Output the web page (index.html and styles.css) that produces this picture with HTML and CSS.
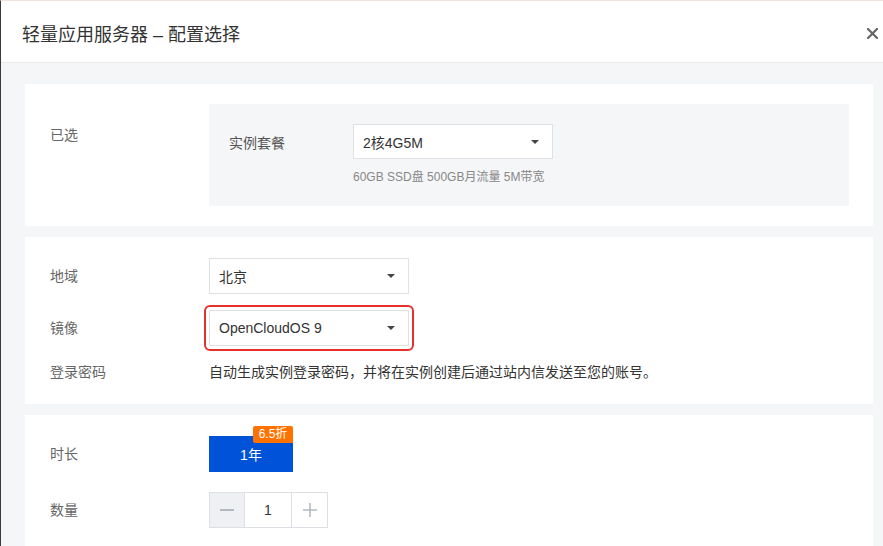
FILE: index.html
```html
<!DOCTYPE html>
<html lang="zh-CN">
<head>
<meta charset="utf-8">
<title>轻量应用服务器 – 配置选择</title>
<link rel="stylesheet" href="styles.css">
</head>
<body>
<div class="modal">
  <header class="modal-header">
    <h1 class="modal-title">轻量应用服务器 – 配置选择</h1>
    <button class="close-btn" aria-label="关闭">
      <svg width="11" height="11" viewBox="0 0 11 11"><path d="M1 1L10 10M10 1L1 10" stroke="#666" stroke-width="2.2" stroke-linecap="square"/></svg>
    </button>
  </header>
  <main class="modal-body">
    <section class="card card-selected">
      <div class="label label-top">已选</div>
      <div class="selected-box">
        <div class="sel-row">
          <span class="sel-label">实例套餐</span>
          <div class="select"><span>2核4G5M</span><i class="caret"></i></div>
        </div>
        <div class="sub-text">60GB SSD盘 500GB月流量 5M带宽</div>
      </div>
    </section>

    <section class="card form-grid">
      <div class="label">地域</div>
      <div class="field"><div class="select"><span>北京</span><i class="caret"></i></div></div>

      <div class="label">镜像</div>
      <div class="field"><div class="select highlighted"><span>OpenCloudOS 9</span><i class="caret"></i></div></div>

      <div class="label">登录密码</div>
      <div class="field field-text">自动生成实例登录密码，并将在实例创建后通过站内信发送至您的账号。</div>
    </section>

    <section class="card form-grid form-grid-wide">
      <div class="label">时长</div>
      <div class="field">
        <button class="period-btn">1年<span class="badge">6.5折</span></button>
      </div>

      <div class="label">数量</div>
      <div class="field">
        <div class="stepper">
          <span class="step step-minus"><i class="minus-line"></i></span>
          <span class="step step-value">1</span>
          <span class="step step-plus">
            <svg width="14" height="14" viewBox="0 0 14 14"><path d="M7 0V14M0 7H14" stroke="#b4b9c2" stroke-width="1.6"/></svg>
          </span>
        </div>
      </div>
    </section>
  </main>
</div>
</body>
</html>
```

FILE: styles.css
```css
* { box-sizing: border-box; }
html, body {
  margin: 0;
  padding: 0;
  height: 100%;
  overflow: hidden;
}
body {
  font-family: "Liberation Sans", "Noto Sans CJK SC", sans-serif;
  color: #333;
  font-size: 14px;
  background: #fff;
}
.modal {
  height: 546px;
  border-top: 1px solid #f1e3d9;
  border-left: 1px solid #3a3a3a;
  display: flex;
  flex-direction: column;
  background: #f5f6f8;
}
.modal-header {
  height: 62px;
  flex: none;
  background: #fff;
  border-bottom: 1px solid #e9eaec;
  display: flex;
  align-items: center;
  justify-content: space-between;
  padding: 0 5px 0 21px;
}
.modal-title {
  margin: 0;
  font-size: 18px;
  font-weight: normal;
  color: #333;
  line-height: 24px;
  padding-top: 6px;
}
.close-btn {
  border: 0;
  background: none;
  padding: 0;
  width: 11px;
  height: 11px;
  display: flex;
  margin-top: 4px;
}
.modal-body {
  flex: 1;
  padding: 21px 10px 0 24px;
  display: flex;
  flex-direction: column;
  gap: 11px;
}
.card {
  background: #fff;
  padding: 20px 24px 20px 25px;
}
.card-selected {
  display: flex;
}
.label {
  width: 159px;
  flex: none;
  color: #666;
  font-size: 14px;
  line-height: 20px;
}
.label-top { padding-top: 21px; }
.selected-box {
  flex: 1;
  background: #f5f6f8;
  padding: 20px;
}
.sel-row {
  display: flex;
  align-items: center;
}
.sel-label {
  width: 124px;
  color: #555;
  font-size: 14px;
}
.select {
  width: 200px;
  height: 35px;
  background: #fff;
  border: 1px solid #dfe1e5;
  display: flex;
  align-items: center;
  justify-content: space-between;
  padding: 0 13px 0 9px;
  font-size: 14px;
  color: #333;
}
.caret {
  width: 0;
  height: 0;
  border-left: 4px solid transparent;
  border-right: 4px solid transparent;
  border-top: 4px solid #444;
}
.sub-text {
  margin-top: 9px;
  margin-left: 124px;
  font-size: 12px;
  line-height: 18px;
  color: #888;
}
.form-grid {
  display: grid;
  grid-template-columns: 159px 1fr;
  row-gap: 16px;
  align-items: center;
  padding-top: 21px;
  padding-bottom: 22px;
}
.form-grid .select { height: 36px; }
.select.highlighted {
  outline: 2px solid #e5302d;
  outline-offset: 3px;
  border-radius: 1px;
}
.field-text {
  color: #333;
  font-size: 14px;
  line-height: 20px;
}
.form-grid-wide {
  row-gap: 20px;
  padding-top: 21px;
}
.period-btn {
  position: relative;
  width: 84px;
  height: 36px;
  border: 0;
  background: #0052d9;
  color: #fff;
  font-family: inherit;
  font-size: 14px;
  padding: 0;
}
.badge {
  position: absolute;
  top: -10px;
  right: 0;
  width: 40px;
  height: 17px;
  background: #ff7200;
  color: #fff;
  font-size: 12px;
  line-height: 17px;
  text-align: center;
  border-radius: 2px 2px 0 2px;
}
.stepper {
  display: inline-flex;
  height: 36px;
  border: 1px solid #dcdfe4;
}
.step {
  display: flex;
  align-items: center;
  justify-content: center;
  height: 100%;
}
.step-minus {
  width: 35px;
  background: #eef0f3;
  border-right: 1px solid #dcdfe4;
}
.minus-line {
  width: 14px;
  height: 2px;
  background: #b4b9c2;
}
.step-value {
  width: 47px;
  border-right: 1px solid #dcdfe4;
  font-size: 14px;
  color: #333;
}
.step-plus {
  width: 35px;
}
```
